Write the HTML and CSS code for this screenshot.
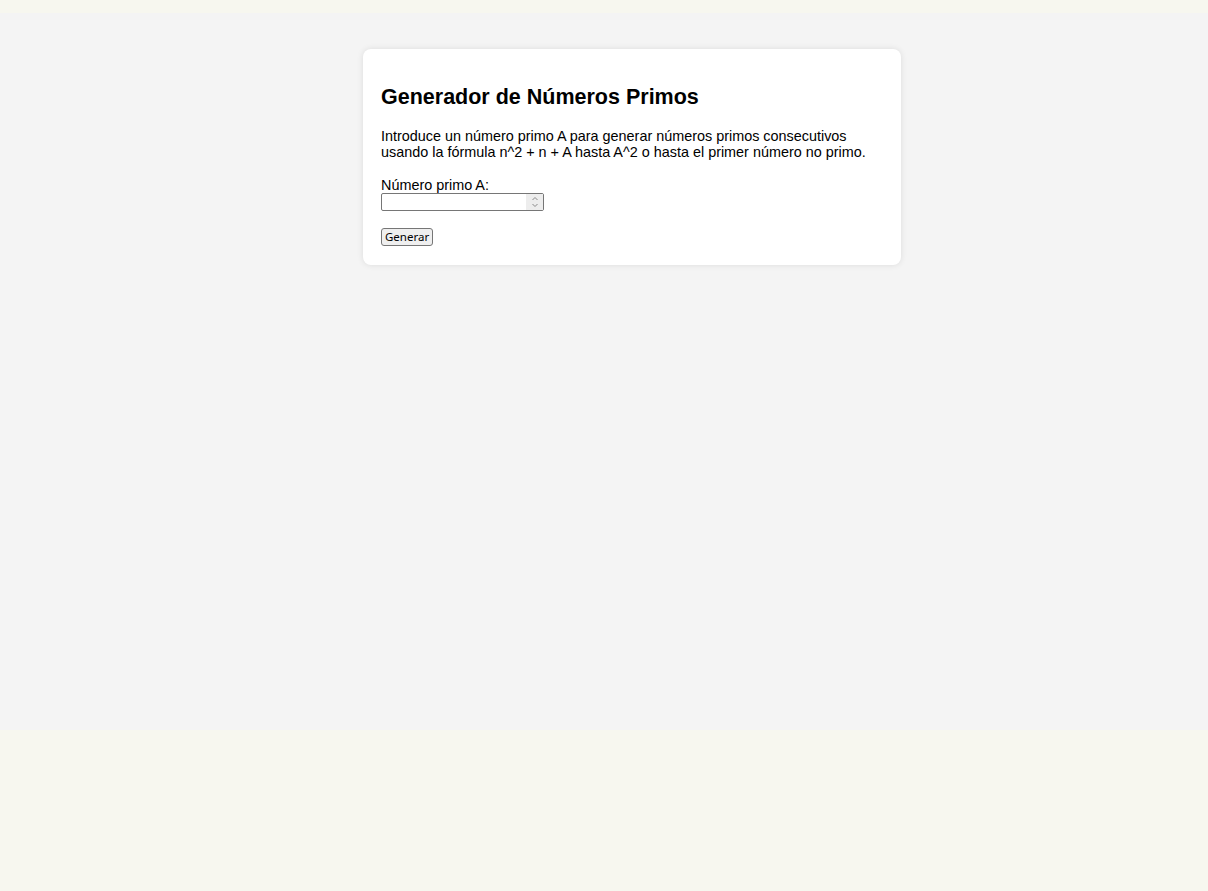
FILE: index.html
```html
<!DOCTYPE html>
<html lang="es">
<head>
<meta charset="utf-8">
<title>Generador de Números Primos</title>
<link rel="stylesheet" href="styles.css">
</head>
<body>
<main class="card">
  <h1 class="title">Generador de Números Primos</h1>
  <p class="intro">Introduce un número primo A para generar números primos consecutivos usando la fórmula n^2 + n + A hasta A^2 o hasta el primer número no primo.</p>
  <label class="label" for="primo">Número primo A:</label>
  <div class="field-wrap">
    <input class="field" type="number" id="primo">
    <span class="spin" aria-hidden="true">
      <svg width="8" height="12" viewBox="0 0 8 12"><path d="M1.5 4 L4 1.5 L6.5 4 M1.5 8 L4 10.5 L6.5 8" fill="none" stroke="#8a8a8a" stroke-width="1"/></svg>
    </span>
  </div>
  <button class="btn" type="button">Generar</button>
</main>
</body>
</html>
```
FILE: styles.css
```css
html {
  background: #f7f7ef;
}
body {
  margin: 13px 0 0 0;
  height: 717px;
  box-sizing: border-box;
  padding: 36px 0 0 56px;
  background: #f4f4f4;
  font-family: "Liberation Sans", Arial, sans-serif;
  color: #000;
}
.card {
  box-sizing: border-box;
  width: 538px;
  margin: 0 auto;
  background: #fff;
  border-radius: 8px;
  box-shadow: 0 0 6px rgba(0, 0, 0, 0.1);
  padding: 16px 18px 19px;
}
.title {
  font-size: 21.5px;
  font-weight: bold;
  line-height: 25px;
  margin: 20px 0 18px;
}
.intro {
  font-size: 14.4px;
  line-height: normal;
  margin: 0 0 17px;
}
.label {
  display: block;
  font-size: 14.4px;
  line-height: normal;
}
.field-wrap {
  position: relative;
  width: 163px;
  height: 18px;
  margin: 0 0 17px;
}
.field {
  display: block;
  box-sizing: border-box;
  width: 163px;
  height: 18px;
  margin: 0;
  padding: 0 2px;
  border: 1px solid #767676;
  border-radius: 2px;
  font-size: 13px;
  -moz-appearance: textfield;
}
.field::-webkit-inner-spin-button,
.field::-webkit-outer-spin-button {
  -webkit-appearance: none;
  margin: 0;
}
.spin {
  position: absolute;
  top: 1px;
  right: 1px;
  width: 17px;
  height: 16px;
  background: #ededed;
  display: flex;
  align-items: center;
  justify-content: center;
  pointer-events: none;
}
.btn {
  display: block;
  height: 18px;
  padding: 0 3px;
  font-family: "Noto Sans", sans-serif;
  font-size: 11.5px;
  line-height: 16px;
  border: 1px solid #767676;
  border-radius: 3px;
  background: #efefef;
  color: #000;
}
```
